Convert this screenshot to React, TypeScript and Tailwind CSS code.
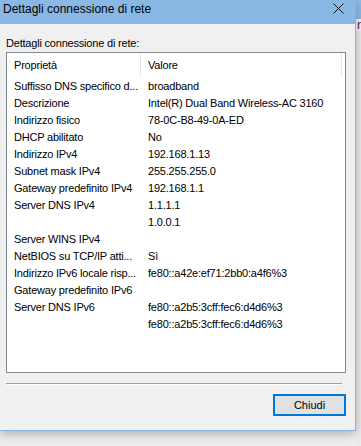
import React from "react";

const rows: [string, string][] = [
  ["Suffisso DNS specifico d...", "broadband"],
  ["Descrizione", "Intel(R) Dual Band Wireless-AC 3160"],
  ["Indirizzo fisico", "78-0C-B8-49-0A-ED"],
  ["DHCP abilitato", "No"],
  ["Indirizzo IPv4", "192.168.1.13"],
  ["Subnet mask IPv4", "255.255.255.0"],
  ["Gateway predefinito IPv4", "192.168.1.1"],
  ["Server DNS IPv4", "1.1.1.1"],
  ["", "1.0.0.1"],
  ["Server WINS IPv4", ""],
  ["NetBIOS su TCP/IP atti...", "Sì"],
  ["Indirizzo IPv6 locale risp...", "fe80::a42e:ef71:2bb0:a4f6%3"],
  ["Gateway predefinito IPv6", ""],
  ["Server DNS IPv6", "fe80::a2b5:3cff:fec6:d4d6%3"],
  ["", "fe80::a2b5:3cff:fec6:d4d6%3"],
];

export default function App() {
  return (
    <div
      className="w-[361px] h-[446px] flex overflow-hidden bg-[#efefef]"
      style={{ fontFamily: '"Liberation Sans", Arial, sans-serif' }}
    >
      <div className="w-[356px] h-[431px] shrink-0 flex flex-col bg-[#f0f0f0] border-r border-b border-[#86b4e2] shadow-[0_3px_10px_rgba(0,0,0,0.28)] relative z-10">
        {/* title bar */}
        <div className="h-[24px] bg-[#89b8e5] flex items-start justify-between">
          <div className="pl-[3px] pt-[1px] text-[12px] leading-[16px] text-black">
            Dettagli connessione di rete
          </div>
          <svg width="11" height="11" viewBox="0 0 11 11" className="mt-[3px] mr-[11px]">
            <path d="M0.5 0.5 L10.5 10.5 M10.5 0.5 L0.5 10.5" stroke="#111" strokeWidth="1" />
          </svg>
        </div>
        {/* content */}
        <div className="flex flex-col pl-[6px] pt-[12px] text-[11px] tracking-[-0.2px] text-black">
          <div className="leading-[14px] mb-[2px]">Dettagli connessione di rete:</div>
          <div className="w-[340px] h-[321px] border border-[#828790] bg-white flex flex-col">
            <div className="h-[24px] flex items-center shrink-0">
              <div className="w-[134px] h-full flex items-center pl-[7px] border-r border-[#e5e5e5]">
                Proprietà
              </div>
              <div className="w-[201px] h-full flex items-center pl-[7px] border-r border-[#e5e5e5]">
                Valore
              </div>
            </div>
            <div className="flex flex-col pt-[1px]">
              {rows.map(([k, v], i) => (
                <div key={i} className="h-[17px] flex items-center">
                  <div className="w-[134px] pl-[7px] whitespace-nowrap overflow-hidden">{k}</div>
                  <div className="pl-[7px] whitespace-nowrap">{v}</div>
                </div>
              ))}
            </div>
          </div>
          <div className="w-[336px] mt-[10px] h-[2px] border-t border-[#a0a0a0] border-b border-b-white" />
          <div className="flex justify-end w-[340px] mt-[9px]">
            <button className="w-[73px] h-[22px] border-2 border-[#0078d7] bg-[#e1e1e1] text-[11px] text-black flex items-center justify-center tracking-[0px]">
              Chiudi
            </button>
          </div>
        </div>
      </div>
      {/* desktop strip behind */}
      <div className="flex-1 flex flex-col">
        <div className="h-[19px] bg-[#8fbbe6]" />
        <div className="h-[12px] bg-[#f5f5f5] text-[13px] leading-[12px] text-[#5a2a6a] pl-[1px] overflow-hidden">n</div>
        <div className="flex-1 bg-[#ececec]" />
      </div>
    </div>
  );
}
